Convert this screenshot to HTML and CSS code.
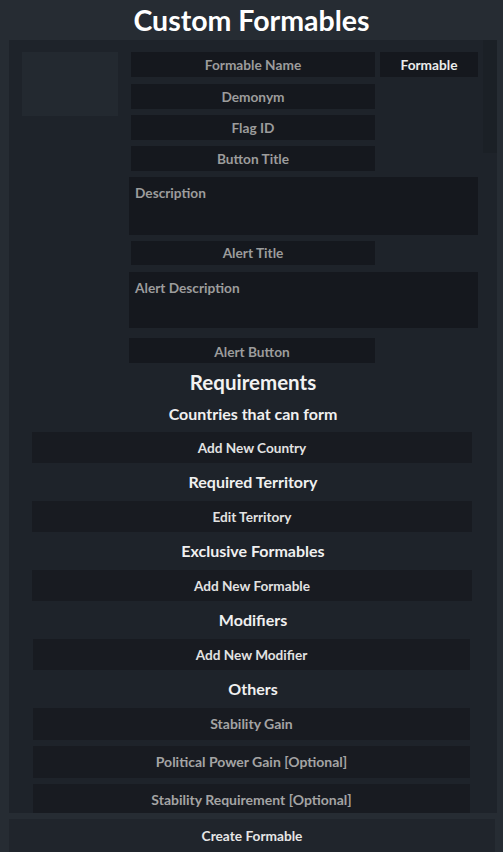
FILE: index.html
```html
<!DOCTYPE html>
<html lang="en">
<head>
<meta charset="utf-8">
<title>Custom Formables</title>
<link rel="stylesheet" href="styles.css">
</head>
<body>
<h1 class="title">Custom Formables</h1>
<div class="panel">
  <div class="scrollbar"></div>
  <div class="top">
    <div class="flag"></div>
    <div class="fields">
      <div class="row">
        <div class="input narrow">Formable Name</div>
        <div class="tag">Formable</div>
      </div>
      <div class="input narrow">Demonym</div>
      <div class="input narrow">Flag ID</div>
      <div class="input narrow">Button Title</div>
      <div class="input area">Description</div>
      <div class="input narrow short">Alert Title</div>
      <div class="input area alert">Alert Description</div>
      <div class="input narrow wide-left">Alert Button</div>
    </div>
  </div>
  <h2 class="section">Requirements</h2>
  <h3 class="sub first">Countries that can form</h3>
  <div class="btn">Add New Country</div>
  <h3 class="sub">Required Territory</h3>
  <div class="btn">Edit Territory</div>
  <h3 class="sub">Exclusive Formables</h3>
  <div class="btn">Add New Formable</div>
  <h3 class="sub">Modifiers</h3>
  <div class="btn alt">Add New Modifier</div>
  <h3 class="sub">Others</h3>
  <div class="btn alt field">Stability Gain</div>
  <div class="btn alt field">Political Power Gain [Optional]</div>
  <div class="btn alt field">Stability Requirement [Optional]</div>
</div>
<div class="create">Create Formable</div>
</body>
</html>
```
FILE: styles.css
```css
* { box-sizing: border-box; }
html, body { margin: 0; padding: 0; }
body {
  background: #262c33;
  font-family: "Lato", "Noto Sans", sans-serif;
  font-weight: 700;
  width: 503px;
  height: 852px;
  overflow: hidden;
}
.title {
  margin: 0;
  height: 40px;
  line-height: 41px;
  text-align: center;
  color: #ffffff;
  font-size: 28.5px;
  font-weight: 700;
}
.panel {
  position: relative;
  margin: 0 6px 0 9px;
  height: 773px;
  background: #1e232a;
  overflow: hidden;
}
.scrollbar {
  position: absolute;
  right: 0;
  top: 0;
  width: 14px;
  height: 113px;
  background: #1b2026;
}
.top {
  display: flex;
  padding: 12px 0 0 13px;
}
.flag {
  width: 96px;
  height: 64px;
  background: #232930;
  flex-shrink: 0;
}
.fields {
  margin-left: 11px;
  display: flex;
  flex-direction: column;
  gap: 6px;
}
.row { display: flex; gap: 5px; margin-bottom: 1px; }
.input {
  background: #15181e;
  color: #9c9c9c;
  font-size: 13.7px;
  text-align: center;
  height: 25px;
  line-height: 26px;
}
.narrow { width: 244px; margin-left: 2px; }
.short { height: 24px; line-height: 24px; }
.wide-left { width: 246px; margin-left: 0; margin-top: 4px; line-height: 27px; }
.area {
  width: 349px;
  height: 58px;
  line-height: 16px;
  text-align: left;
  padding: 8px 6px;
}
.alert { height: 56px; margin-top: 1px; }
.tag {
  width: 98px;
  height: 25px;
  line-height: 26px;
  background: #15181e;
  color: #ececec;
  font-size: 13.7px;
  text-align: center;
}
.section {
  margin: 0;
  height: 38px;
  line-height: 38px;
  text-align: center;
  color: #f2f2f2;
  font-size: 20.5px;
  font-weight: 700;
}
.sub {
  margin: 0;
  height: 38px;
  line-height: 38px;
  text-align: center;
  color: #f0f0f0;
  font-size: 16px;
  font-weight: 700;
}
.sub.first { height: 31px; line-height: 26px; }
.btn {
  width: 440px;
  margin-left: 23px;
  height: 31px;
  line-height: 32px;
  background: #181b21;
  color: #e2e2e2;
  font-size: 13.6px;
  text-align: center;
}
.btn.alt { width: 437px; margin-left: 24px; }
.btn.field { color: #a4a4a4; margin-bottom: 6px; height: 32px; line-height: 32px; font-size: 14px; }
.create {
  margin: 6px 8px 0 9px;
  height: 33px;
  line-height: 34px;
  background: #20252c;
  color: #e6e6e6;
  font-size: 13.7px;
  text-align: center;
}
```
